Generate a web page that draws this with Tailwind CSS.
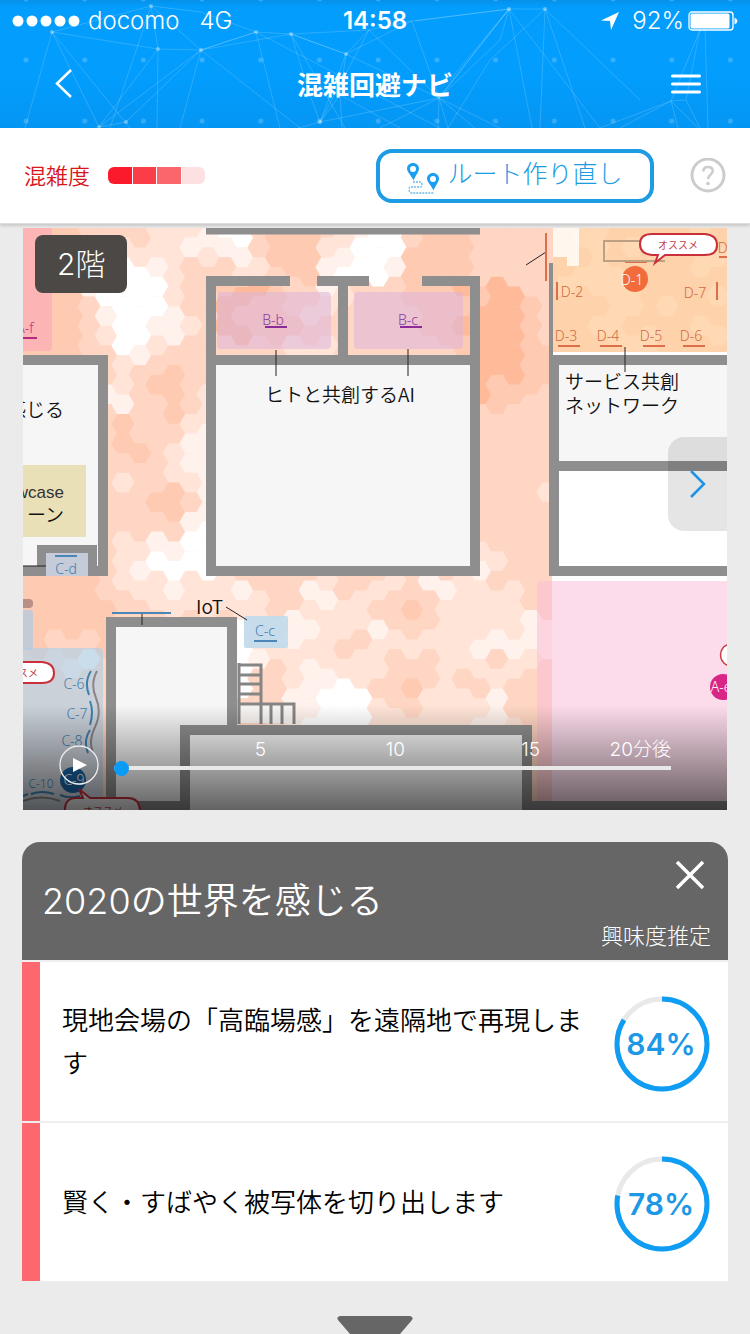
<!DOCTYPE html>
<html lang="ja">
<head>
    <meta charset="UTF-8">
    <meta name="viewport" content="width=device-width, initial-scale=1.0">
    <title>混雑回避ナビ</title>
    <script src="https://cdn.jsdelivr.net/npm/@tailwindcss/browser@4"></script>
</head>
<body class="min-h-screen bg-[#ebebeb] font-['Inter','Noto_Sans_CJK_JP',sans-serif] text-black overflow-x-hidden">

<!-- Header: status bar and title bar over the network pattern -->
<header class="relative h-32 overflow-hidden bg-[#029dfd] text-white">
    <svg class="absolute inset-0 w-full h-full" viewBox="0 0 750 128" preserveAspectRatio="none" fill="none" aria-hidden="true">
        <defs>
            <linearGradient id="headShade" x1="0" y1="0" x2="0" y2="1">
                <stop offset="0" stop-color="#0691ea" />
                <stop offset=".06" stop-color="#029dfd" />
                <stop offset=".6" stop-color="#029dfd" />
                <stop offset="1" stop-color="#0596f3" />
            </linearGradient>
            <pattern id="dots" x="-3" y="30" width="58.7" height="61" patternUnits="userSpaceOnUse">
                <circle cx="29" cy="30" r="2.5" fill="#fff" fill-opacity=".2" />
            </pattern>
        </defs>
        <rect width="750" height="128" fill="url(#headShade)" />
        <rect width="750" height="128" fill="url(#dots)" />
        <g stroke="#fff" stroke-opacity=".17">
            <path d="M52 32L158 49L201 50L256 32L291 34L346 54L369 30L412 21L509 9L545 9M52 32L99 127L126 122L201 50L151 6L158 49L99 127M52 32L151 6L201 12L256 32" />
            <path d="M52 32L25 128M52 32L130 128M151 6L110 128M158 49L157 128M201 50L99 127M201 50L180 128M201 50L300 128M256 32L201 50M256 32L280 128M256 32L440 128M291 34L201 50M291 34L310 95L320 122L346 54L291 34L345 128M291 34L369 30" />
            <path d="M346 54L340 95L320 122L298 128M340 95L342 128M346 54L439 98L369 30M340 95L400 128M346 54L412 21M369 30L320 122M412 21L439 98L509 9L450 80M439 98L438 128M439 98L448 128M439 98L320 122M439 98L380 128M439 98L475 128M439 98L500 128" />
            <path d="M509 9L439 98M509 9L415 21M509 9L532 128M509 9L600 128M545 9L540 128M545 9L585 128M545 9L490 60L448 128M545 9L640 100M509 9L500 40L439 98" />
            <path d="M700 30L686 100L671 101L620 128M671 101L600 128M671 101L678 128M686 100L700 128M700 30L671 101M705 30L708 128M671 101L698 128" />
        </g>
        <g fill="#fff" fill-opacity=".35">
            <circle cx="52" cy="32" r="2" /><circle cx="151" cy="6" r="2" /><circle cx="158" cy="49" r="2" />
            <circle cx="201" cy="50" r="2" /><circle cx="256" cy="32" r="2" /><circle cx="291" cy="34" r="2" />
            <circle cx="346" cy="54" r="2" /><circle cx="320" cy="122" r="2" /><circle cx="99" cy="127" r="2" />
            <circle cx="126" cy="122" r="2" /><circle cx="509" cy="9" r="2" /><circle cx="545" cy="9" r="2" />
        </g>
    </svg>

    <div class="relative grid grid-cols-[1fr_auto_1fr] items-center h-[42px] pl-3 pr-3 text-2xl leading-10">
        <div class="flex items-center">
            <svg class="w-[68px] h-3" viewBox="0 0 68 12" fill="#fff" aria-hidden="true">
                <circle cx="6" cy="6" r="5.5" /><circle cx="20" cy="6" r="5.5" /><circle cx="34" cy="6" r="5.5" /><circle cx="48" cy="6" r="5.5" /><circle cx="62" cy="6" r="5.5" />
            </svg>
            <span class="ml-2 font-light">docomo</span>
            <span class="ml-5 font-light">4G</span>
        </div>
        <div class="font-semibold">14:58</div>
        <div class="flex items-center justify-end">
            <svg class="w-5 h-5 mr-3" viewBox="0 0 20 20" fill="#fff" aria-hidden="true"><path d="M19 1L11 19L10 10L1 9.500Z" /></svg>
            <span class="mr-1 font-light">92%</span>
            <svg class="w-[50px] h-5" viewBox="0 0 50 20" aria-hidden="true">
                <rect x="1" y="1" width="44" height="18" rx="3" fill="none" stroke="#fff" stroke-width="1.300" />
                <rect x="2.500" y="2.500" width="39" height="15" rx="1.500" fill="#fff" />
                <path d="M46.500 6.500Q49.500 8 49.500 10T46.500 13.500Z" fill="#fff" />
            </svg>
        </div>
    </div>

    <div class="relative flex items-center justify-between h-[84px] px-12">
        <button type="button" aria-label="戻る" class="w-8 h-10 flex items-center justify-center">
            <svg class="w-5 h-8" viewBox="0 0 20 32" fill="none" stroke="#fff" stroke-width="2.500"><path d="M17 2L3 15.500L17 29" /></svg>
        </button>
        <h1 class="pt-1 text-[26px] leading-10 font-bold">混雑回避ナビ</h1>
        <button type="button" aria-label="メニュー" class="w-8 h-10 flex items-center justify-center">
            <svg class="w-8 h-6" viewBox="0 0 32 24" stroke="#fff" stroke-width="3" stroke-linecap="round"><path d="M2.500 4H29.500M2.500 12H29.500M2.500 20H29.500" /></svg>
        </button>
    </div>
</header>

<!-- Toolbar -->
<div class="relative z-10 flex items-center h-24 pl-6 pr-6 bg-white border-b border-[#ddd] shadow-[0_2px_3px_rgba(0,0,0,0.15)]">
    <span class="text-[22px] leading-8 font-[350] text-[#d8161c]">混雑度</span>
    <div class="flex gap-px ml-[18px] w-[97px] h-[17px] rounded-md overflow-hidden" role="img" aria-label="混雑度の凡例">
        <span class="flex-1 bg-[#fb1a2c]"></span>
        <span class="flex-1 bg-[#fb3d47]"></span>
        <span class="flex-1 bg-[#fb666d]"></span>
        <span class="flex-1 bg-[#fde0e2]"></span>
    </div>
    <button type="button" class="ml-auto flex items-center justify-center gap-2 w-[278px] h-[54px] rounded-2xl border-4 border-[#1d9be3] text-[#1d9be3] text-[25px] leading-8 font-light">
        <svg class="w-8 h-8 mt-1 shrink-0" viewBox="0 0 32 32" aria-hidden="true">
            <path fill="#1b9ff0" fill-rule="evenodd" d="M6 1C9.500 1 12 3.500 12 6.800C12 10 8 14.500 6.500 18.500C5 14.500 0 10 0 6.800C0 3.500 2.500 1 6 1ZM6 4A3 3 0 1 0 6 10A3 3 0 1 0 6 4Z" />
            <path fill="#1b9ff0" fill-rule="evenodd" d="M26 11C29.500 11 32 13.500 32 16.800C32 20 28 24.500 26.500 28.500C25 24.500 20 20 20 16.800C20 13.500 22.500 11 26 11ZM26 14A3 3 0 1 0 26 20A3 3 0 1 0 26 14Z" />
            <path fill="none" stroke="#6bb8e8" stroke-width="1.300" stroke-dasharray="2 1" d="M6 20H13Q15 20 15 22.500T13 25H4Q2 25 2 27.500T4 31H27" />
        </svg>
        <span class="pb-1">ルート作り直し</span>
    </button>
    <button type="button" aria-label="ヘルプ" class="ml-9 w-9 h-9">
        <svg class="w-9 h-9" viewBox="0 0 36 36" fill="none" stroke="#ccc" stroke-width="3">
            <circle cx="18" cy="17" r="16" />
            <path d="M13.300 13.500Q13.300 9 18 9T22.700 13Q22.700 15 20.500 16.700T18 21" stroke-width="2.500" />
            <circle cx="18" cy="25.500" r="1.800" fill="#ccc" stroke="none" />
        </svg>
    </button>
</div>

<main>
    <!-- Floor map with the congestion heat layer -->
    <section class="relative mx-[23px] mt-1 overflow-hidden bg-white" aria-label="フロアマップ">
        <svg class="block w-full h-auto" viewBox="23 228 704 582" font-family="'Noto Sans CJK JP', sans-serif" font-size="19">
            <defs>
                <linearGradient id="fade" x1="0" y1="0" x2="0" y2="1">
                    <stop offset="0" stop-color="#000" stop-opacity="0" />
                    <stop offset="1" stop-color="#000" stop-opacity=".6" />
                </linearGradient>
            </defs>
            <rect x="23" y="228" width="704" height="582" fill="#ffd5c1" />
            <g id="heat"></g>

            <!-- Hall D -->
            <rect x="553" y="228" width="174" height="128" fill="#fdd29c" fill-opacity=".62" />
            <path d="M553 228H579V266H567V257H553Z" fill="#fff" fill-opacity=".8" />
            <path d="M553 352H727V357H553Z" fill="#fff" />
            <!-- Hall A, bottom right -->
            <path d="M552 575H727V810H552Z" fill="#fff" />
            <rect x="537" y="581" width="200" height="240" rx="5" fill="#f9b9d7" fill-opacity=".5" />
            <!-- Booth areas -->
            <rect x="0" y="228" width="52" height="123" rx="4" fill="#f9a0b8" fill-opacity=".5" />
            <rect x="0" y="648" width="103" height="170" rx="4" fill="#b4cfe2" fill-opacity=".7" />
            <rect x="0" y="610" width="33" height="40" rx="2" fill="#b5cbe0" fill-opacity=".8" />
            <rect x="0" y="599" width="33" height="9" rx="4" fill="#b98f86" />
            <rect x="217" y="292" width="114" height="57" rx="4" fill="#dbb4dd" fill-opacity=".55" />
            <rect x="354" y="292" width="109" height="57" rx="4" fill="#dbb4dd" fill-opacity=".55" />
            <rect x="244" y="616" width="44" height="32" rx="2" fill="#c3dbec" fill-opacity=".95" />

            <!-- Closed rooms -->
            <path d="M23 361H102V571H23ZM211 360H475V571H211ZM554 361H727V465H554ZM111 622H231V726H185V810H111ZM185 731H527V810H185Z" fill="#f6f6f6" />
            <path d="M554 466H727V571H554Z" fill="#fff" />
            <path d="M23 465H86V537H23Z" fill="#e9e0b8" />

            <!-- Walls -->
            <g fill="none" stroke="#8e8e8e" stroke-width="10">
                <path d="M206 231H480" stroke-width="7" />
                <path d="M290 281H211V571H475V281H422M317 281H369M343 281V360M211 360H475" />
                <path d="M23 360H103V571H92V550H42V571H23" />
                <path d="M551 263V360" stroke-width="4" />
                <path d="M554 355V571H727M554 360H727M554 466H727" />
                <path d="M185 806H111V622H232V730M185 810V730H527V806H727" />
            </g>
            <rect x="46" y="553" width="42" height="23" fill="#c5cbd8" />
            <path d="M238 704H294V723H238Z" fill="#f8f4f2" />
            <path d="M238 665H261V724M238 675H261M238 684H261M238 694H261M238 704H294V724M271 704V724M282 704V724" fill="none" stroke="#858585" stroke-width="3" />
            <path d="M239 663V724" stroke="#858585" stroke-width="3" />

            <!-- Leader lines -->
            <g fill="none" stroke="#222" stroke-width="1">
                <path d="M276 350V376M408 349V376M625 347V372M526 265L546 252M226 607L247 620M142 613V625M23 566H46" />
            </g>

            <!-- Booth marks -->
            <g fill="none" stroke-width="2">
                <path d="M265 327H287M400 327H422" stroke="#8b2a99" />
                <path d="M16 338H37" stroke="#b52a7c" />
                <path d="M55 556H77M112 613H171M254 641H277" stroke="#4c86b8" />
                <path d="M546 233V281M557 282V300M717 282V300M625 262H647M558 346H580M600 346H622M643 346H665M683 346H705M719 257H727" stroke="#dc6f49" />
                <path d="M665 261H604V241H645" stroke="#bda083" />
                <path d="M91 671Q84 682 89 695M90 701Q94 712 90 725M90 730Q83 741 88 753M31 794Q42 790 54 794M60 795Q70 799 80 796M23 796L28 794" stroke="#3f7fae" />
                <path d="M97 671Q90 684 96 698T95 727T93 752M23 801Q42 794 60 801" stroke="#8c8488" />
            </g>
            <path d="M735 645H727A11 11 0 0 0 727 665H735" fill="#fff" stroke="#c83a44" stroke-width="1.500" />
            <circle cx="635" cy="279" r="13" fill="#f26b3c" />
            <circle cx="723" cy="687" r="13" fill="#d92586" />
            <circle cx="73" cy="780" r="13" fill="#1a62a0" />
            <path d="M652 234H705Q717 235 717 245T705 255H665L655 263L658 255H652Q640 254 640 244T652 234Z" fill="#fff" stroke="#c9303a" stroke-width="2" />
            <path d="M10 662H42Q54 663 54 673T42 683H10Z" fill="#fff" stroke="#c9303a" stroke-width="2" />
            <path d="M65 812Q64 798 76 798H83L79 789L90 798H128Q140 798 140 812Z" fill="#eee" stroke="#c9303a" stroke-width="2" />

            <!-- Booth labels -->
            <g font-family="'Noto Sans', sans-serif" font-size="14" font-weight="300" text-anchor="middle">
                <text x="273" y="325" fill="#8b3a9c">B-b</text>
                <text x="408" y="325" fill="#8b3a9c">B-c</text>
                <text x="25" y="333" fill="#b8367f">A-f</text>
                <g fill="#3f7db3">
                    <text x="66" y="574">C-d</text>
                    <text x="265" y="636">C-c</text>
                    <text x="74" y="689">C-6</text>
                    <text x="77" y="719">C-7</text>
                    <text x="72" y="746">C-8</text>
                    <text x="41" y="788" font-size="12">C-10</text>
                </g>
                <g fill="#d0693f">
                    <text x="572" y="297">D-2</text>
                    <text x="695" y="298">D-7</text>
                    <text x="566" y="341">D-3</text>
                    <text x="608" y="341">D-4</text>
                    <text x="651" y="341">D-5</text>
                    <text x="691" y="341">D-6</text>
                    <text x="729" y="253">D-8</text>
                </g>
                <g fill="#fff">
                    <text x="632" y="285">D-1</text>
                    <text x="721" y="692">A-e</text>
                    <text x="74" y="785">C-9</text>
                </g>
            </g>
            <g fill="#c0404a" font-size="10" text-anchor="middle">
                <text x="678" y="249">オススメ</text>
                <text x="18" y="677">オススメ</text>
                <text x="103" y="815">オススメ</text>
            </g>

            <!-- Room names -->
            <g fill="#111" font-weight="350">
                <text x="265" y="402">ヒトと共創するAI</text>
                <text x="565" y="389">サービス共創</text>
                <text x="565" y="413">ネットワーク</text>
                <text x="64" y="417" text-anchor="end">を感じる</text>
                <text x="64" y="522" text-anchor="end">ーン</text>
                <text x="64" y="498" text-anchor="end" font-family="'Liberation Sans', sans-serif" font-size="17" fill="#333">Showcase</text>
                <text x="196" y="614">IoT</text>
            </g>
            <rect x="23" y="705" width="704" height="105" fill="url(#fade)" />
        </svg>

        <div class="absolute left-3 top-[7px] px-[22px] rounded-lg bg-[#4b4845] text-white text-[30px] leading-[58px] font-light">2階</div>

        <button type="button" aria-label="次のフロア" class="absolute right-0 top-[209px] w-[59px] h-[94px] flex items-center justify-center rounded-l-2xl bg-black/10">
            <svg class="w-5 h-8" viewBox="0 0 20 32" fill="none" stroke="#1d93e6" stroke-width="2.500"><path d="M3 3L16 16L3 29" /></svg>
        </button>

        <!-- Time slider -->
        <div class="absolute inset-x-0 bottom-0 h-[75px] pl-[36px] pr-[56px] flex items-start text-white">
            <button type="button" aria-label="再生" class="mt-[10px] w-10 h-10 shrink-0">
                <svg class="w-10 h-10" viewBox="0 0 40 40"><circle cx="20" cy="20" r="19" fill="none" stroke="#eee" stroke-width="1.300" /><path d="M14 13L28 20L14 27Z" fill="#fff" /></svg>
            </button>
            <div class="flex-1 ml-[15px]">
                <div class="grid grid-cols-[134fr_139fr_135fr_131fr] pl-[18px] pt-px text-right text-[19px] leading-7 font-light">
                    <span>5</span><span>10</span><span>15</span><span>20分後</span>
                </div>
                <input type="range" min="0" max="20" value="0" aria-label="何分後の混雑度" class="block w-full h-1 mt-[2px] appearance-none bg-[#e8e8e8] [&::-webkit-slider-thumb]:appearance-none [&::-webkit-slider-thumb]:w-[15px] [&::-webkit-slider-thumb]:h-[15px] [&::-webkit-slider-thumb]:rounded-full [&::-webkit-slider-thumb]:bg-[#0a9bf9]">
            </div>
        </div>
    </section>

    <!-- Exhibit list -->
    <section class="mx-[22px] mt-8">
        <div class="relative flex items-center h-[118px] pl-5 rounded-t-[18px] bg-[#666] text-white">
            <h2 class="text-4xl leading-[54px] font-[350]">2020の世界を感じる</h2>
            <button type="button" aria-label="閉じる" class="absolute right-[22px] top-[17px] w-8 h-8">
                <svg class="w-8 h-8" viewBox="0 0 32 32" stroke="#fff" stroke-width="3.500"><path d="M3 3L29 29M29 3L3 29" /></svg>
            </button>
            <span class="absolute right-[17px] bottom-1 text-[22px] leading-10 font-light">興味度推定</span>
        </div>
        <ul>
            <li class="flex items-center h-[161px] border-t-2 border-[#efefef] bg-white">
                <span class="self-stretch w-[18px] bg-[#fd686e]"></span>
                <p class="flex-1 pl-[22px] pr-7 text-[26px] leading-[43px] font-[350]">現地会場の「高臨場感」を遠隔地で再現します</p>
                <div class="mr-[18px] pt-1 shrink-0">
                    <svg class="w-24 h-24" viewBox="0 0 96 96" fill="none" stroke-width="5" role="img" aria-label="84%">
                        <circle cx="48" cy="48" r="45" stroke="#e9e9e9" />
                        <circle cx="48" cy="48" r="45" stroke="#0f9df3" pathLength="100" stroke-dasharray="84 16" transform="rotate(-90 48 48)" />
                        <text x="47" y="59" text-anchor="middle" font-size="30" font-weight="600" fill="#1d98e6" stroke="none">84%</text>
                    </svg>
                </div>
            </li>
            <li class="flex items-center h-[160px] border-t-2 border-[#efefef] bg-white">
                <span class="self-stretch w-[18px] bg-[#fd686e]"></span>
                <p class="flex-1 pl-[22px] pr-7 text-[26px] leading-[43px] font-[350]">賢く・すばやく被写体を切り出します</p>
                <div class="mr-[18px] pt-1 shrink-0">
                    <svg class="w-24 h-24" viewBox="0 0 96 96" fill="none" stroke-width="5" role="img" aria-label="78%">
                        <circle cx="48" cy="48" r="45" stroke="#e9e9e9" />
                        <circle cx="48" cy="48" r="45" stroke="#0f9df3" pathLength="100" stroke-dasharray="78 22" transform="rotate(-90 48 48)" />
                        <text x="47" y="59" text-anchor="middle" font-size="30" font-weight="600" fill="#1d98e6" stroke="none">78%</text>
                    </svg>
                </div>
            </li>
        </ul>
    </section>

    <button type="button" aria-label="もっと見る" class="block mx-auto mt-[35px]">
        <svg class="block w-[76px] h-[18px]" viewBox="0 0 76 18" fill="#666"><path d="M3 0H73Q77 1 75 4L63 18H13L1 4Q-1 1 3 0Z" /></svg>
    </button>
</main>

<script>
    // Congestion level (0-5) of each hexagon, one string per row
    const levels = [
        '444433332221003444321003444333333223333323',
        '444433222212113444210004444333333323233332',
        '444421001233322344100014444333333222333323',
        '444410000233455433123334445455332322233332',
        '444431000133544432233333444555433332232333',
        '444432001123554443333333445555433322323322',
        '444433012333333322233333334555443333223333',
        '444433233433322333322233333555443332322333',
        '444431234432333333333333333544433333333333',
        '444433133432333333333333333343333333333333',
        '444433433321333333333333333333333333333333',
        '444433443211333333333333333333333333333333',
        '444433333211333333333333333333333333333333',
        '444433233421333333333333333333323333333333',
        '444433334431333333333333333333333333333333',
        '444433333310333333333333333333333333333333',
        '444433221100333333333333333233333333333333',
        '444433210000333333333333333123333333333333',
        '444443222122213331233223112232333333333333',
        '444444332222222332122334322222333333333333',
        '444444333333302211222133322222113333333333',
        '443334333333302212233222222111113333333333',
        '332103333333301321222233322232233333333333',
        '333333333333303321102334323323333333333333',
        '333333333333333311000233222213333333333333',
        '333333333333333210000222222112333333333333',
        '333333333333333333333333333322333333333333',
        '343333333333333333333333333333333333333333',
        '334333333333333333333333333333333333333333',
        '333333333333333333333333333333333333333333',
    ];
    const colors = ['#ffffff', '#fff1eb', '#ffe4d7', '#ffd6c3', '#fecab1', '#ffba99'];
    const heat = document.getElementById('heat');

    levels.forEach((row, r) => {
        [...row].forEach((level, c) => {
            const x = 21 + c * 17;
            const y = 228 + r * 19.6 + (c % 2 ? 9.8 : 0);
            const hex = document.createElementNS('http://www.w3.org/2000/svg', 'path');
            hex.setAttribute('d', `M${x - 11.6} ${y}l5.8 -10h11.6l5.8 10l-5.8 10h-11.6z`);
            hex.setAttribute('fill', colors[level]);
            heat.appendChild(hex);
        });
    });
</script>
</body>
</html>
